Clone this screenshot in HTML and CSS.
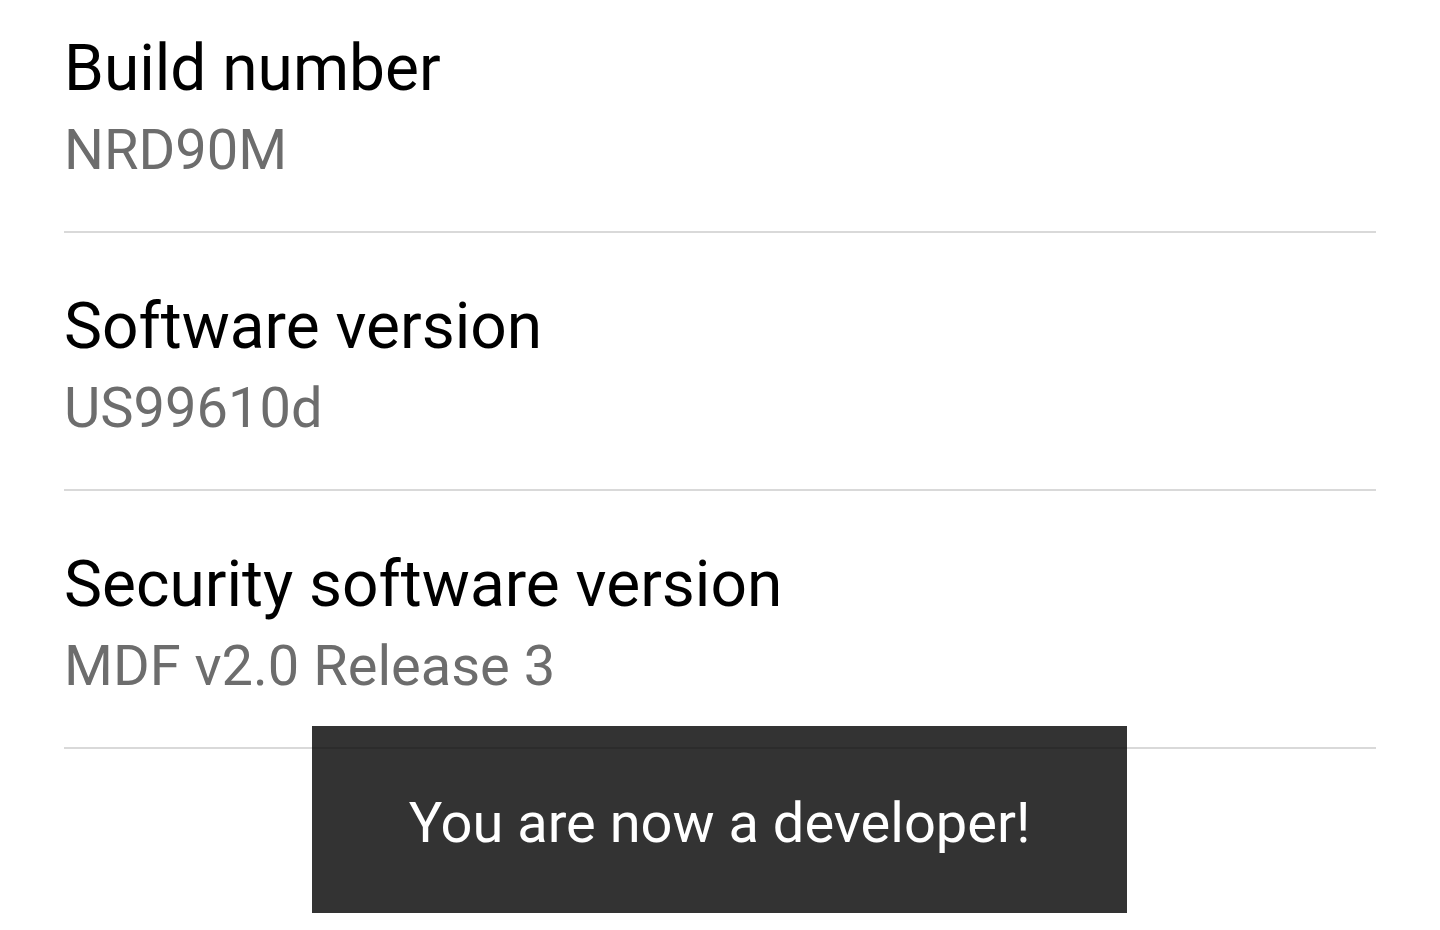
FILE: index.html
```html
<!DOCTYPE html>
<html lang="en">
<head>
  <meta charset="UTF-8" />
  <meta name="viewport" content="width=device-width, initial-scale=1.0" />
  <title>About phone</title>
  <link rel="stylesheet" href="styles.css">
</head>
<body>
  <main class="list">
    <div class="item">
      <div class="title">Build number</div>
      <div class="summary">NRD90M</div>
    </div>
    <div class="item">
      <div class="title">Software version</div>
      <div class="summary">US99610d</div>
    </div>
    <div class="item">
      <div class="title">Security software version</div>
      <div class="summary">MDF v2.0 Release 3</div>
    </div>
  </main>

  <div class="toast">You are now a developer!</div>
</body>
</html>
```

FILE: styles.css
```css
body {
  font-family: Roboto, 'Noto Sans', sans-serif;
  background: #fff;
  margin: 0;
  padding: 0;
  overflow: hidden;
  height: 930px;
}
.list {
  margin: -25px 64px 0;
}
.item {
  padding: 56px 0 48px;
  border-bottom: 2px solid #d9d9d9;
}
.title {
  font-size: 64px;
  line-height: 76px;
  color: #000;
}
.summary {
  margin-top: 10px;
  font-size: 56px;
  line-height: 66px;
  color: #6d6d6d;
}
.toast {
  position: absolute;
  left: 312px;
  top: 726px;
  width: 815px;
  height: 187px;
  box-sizing: border-box;
  padding-top: 64px;
  background: rgba(0, 0, 0, 0.8);
  color: #fff;
  font-size: 56px;
  line-height: 66px;
  text-align: center;
}
```
